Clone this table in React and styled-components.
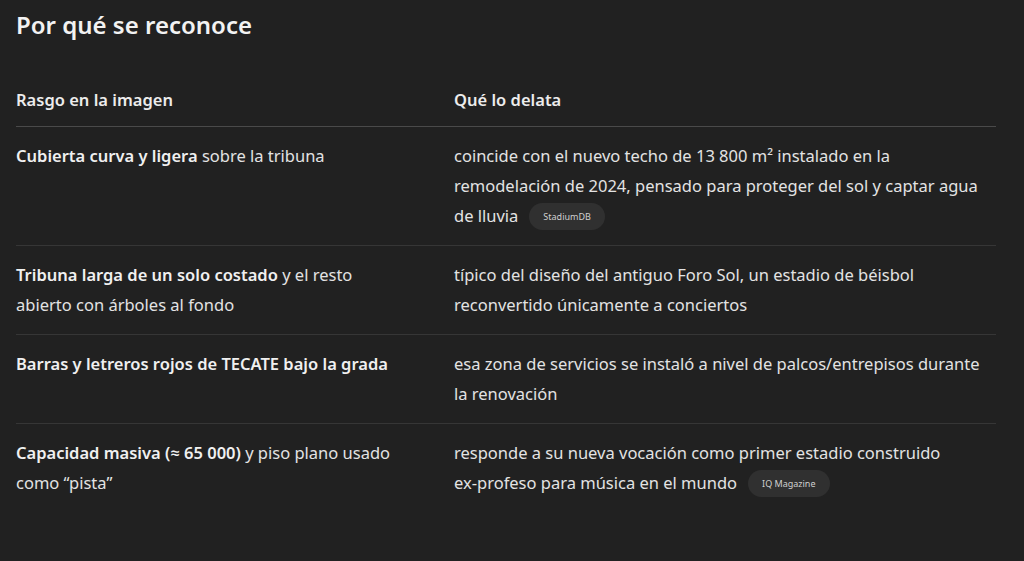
import React from "react";
import styled, { createGlobalStyle } from "styled-components";

const GlobalStyle = createGlobalStyle`
  html, body {
    margin: 0;
    padding: 0;
    background: #212121;
  }
  body {
    font-family: "Noto Sans", "Open Sans", sans-serif;
    color: #ececec;
  }
`

const Page = styled.div`
  width: 1024px;
  height: 561px;
  box-sizing: border-box;
  padding: 7px 28px 0 16px;
  background: #212121;
  overflow: hidden;
`
const Title = styled.h2`
  margin: 0;
  font-size: 24px;
  font-weight: 600;
  line-height: 36px;
  color: #f2f2f2;
`
const Table = styled.div`
  margin-top: 42px;
  display: grid;
  grid-template-columns: 438px 542px;
`
const HeadCell = styled.div`
  font-size: 16.5px;
  font-weight: 600;
  line-height: 30px;
  padding-bottom: 11px;
  border-bottom: 1px solid #4a4a4a;
  color: #ececec;
`
const Cell = styled.div`
  font-size: 16.5px;
  line-height: 30px;
  padding: 14px ${(p) => (p.$wide ? "0" : "46px")} 14px 0;
  border-bottom: ${(p) => (p.$last ? "none" : "1px solid #363636")};
  color: #e3e3e3;
`
const Strong = styled.strong`
  font-weight: 600;
  color: #f0f0f0;
`
const NoWrap = styled.span`
  white-space: nowrap;
`
const Badge = styled.span`
  display: inline-flex;
  align-items: center;
  height: 27px;
  padding: 0 14px;
  margin-left: 11px;
  border-radius: 14px;
  background: #303030;
  font-size: 9px;
  line-height: 1;
  color: #cfcfcf;
  vertical-align: middle;
  position: relative;
  top: -1px;
`

const rows = [
  {
    trait: <><Strong>Cubierta curva y ligera</Strong> sobre la tribuna</>,
    clue: <>coincide con el nuevo techo de 13 800 m² instalado en la remodelación de 2024, pensado para proteger del sol y captar agua de lluvia<Badge>StadiumDB</Badge></>,
  },
  {
    trait: <><Strong>Tribuna larga de un solo costado</Strong> y el resto abierto con árboles al fondo</>,
    clue: <>típico del diseño del antiguo Foro Sol, un estadio de béisbol reconvertido únicamente a conciertos</>,
  },
  {
    trait: <><Strong>Barras y letreros rojos de TECATE bajo la grada</Strong></>,
    clue: <>esa zona de servicios se instaló a nivel de palcos/entrepisos durante la renovación</>,
  },
  {
    trait: <><Strong>Capacidad masiva (≈ 65 000)</Strong> y piso plano usado como “pista”</>,
    clue: <>responde a su nueva vocación como primer estadio construido <NoWrap>ex-profeso</NoWrap> para música en el mundo<Badge>IQ Magazine</Badge></>,
  },
]

export default function App() {
  return (
    <Page>
      <GlobalStyle />
      <Title>Por qué se reconoce</Title>
      <Table>
        <HeadCell>Rasgo en la imagen</HeadCell>
        <HeadCell>Qué lo delata</HeadCell>
        {rows.map((row, i) => (
          <React.Fragment key={i}>
            <Cell $last={i === rows.length - 1}>{row.trait}</Cell>
            <Cell $wide $last={i === rows.length - 1}>{row.clue}</Cell>
          </React.Fragment>
        ))}
      </Table>
    </Page>
  )
}
